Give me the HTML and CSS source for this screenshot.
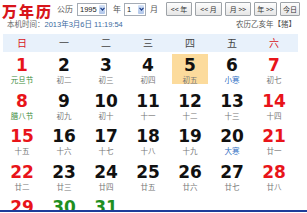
FILE: index.html
```html
<!DOCTYPE html>
<html lang="zh-CN">
<head>
<meta charset="utf-8">
<title>万年历</title>
<link rel="stylesheet" href="styles.css">
</head>
<body>
<div class="page">
  <div class="top">
    <div class="title">万年历</div>
    <span class="lbl l-gl">公历</span>
    <span class="sel sel-y"><span class="val">1995</span><span class="arr"><svg width="5" height="4" viewBox="0 0 5 4"><path d="M0.5 0.8 L2.5 3 L4.5 0.8" fill="none" stroke="#1d3f8a" stroke-width="1.2"/></svg></span></span>
    <span class="lbl l-y">年</span>
    <span class="sel sel-m"><span class="val">1</span><span class="arr"><svg width="5" height="4" viewBox="0 0 5 4"><path d="M0.5 0.8 L2.5 3 L4.5 0.8" fill="none" stroke="#1d3f8a" stroke-width="1.2"/></svg></span></span>
    <span class="lbl l-m">月</span>
    <div class="btns">
      <span class="btn">&lt;&lt; 年</span>
      <span class="btn b-w">&lt;&lt; 月</span>
      <span class="btn">月 &gt;&gt;</span>
      <span class="btn b-n">年 &gt;&gt;</span>
      <span class="btn btn-today">今日</span>
    </div>
  </div>
  <div class="info">
    <span class="now">本机时间：<span class="time">2013年3月6日 11:19:54</span></span>
    <span class="lyear">农历乙亥年【猪】</span>
  </div>
  <div class="weekbar">
    <div class="weeks">
      <span class="wk red">日</span><span class="wk">一</span><span class="wk">二</span><span class="wk">三</span><span class="wk">四</span><span class="wk">五</span><span class="wk red">六</span>
    </div>
  </div>
  <div class="days">
    <div class="day"><div class="num red">1</div><div class="lunar fest">元旦节</div></div>
    <div class="day"><div class="num">2</div><div class="lunar">初二</div></div>
    <div class="day"><div class="num">3</div><div class="lunar">初三</div></div>
    <div class="day"><div class="num">4</div><div class="lunar">初四</div></div>
    <div class="day today"><div class="num">5</div><div class="lunar">初五</div></div>
    <div class="day"><div class="num">6</div><div class="lunar term">小寒</div></div>
    <div class="day"><div class="num red">7</div><div class="lunar">初七</div></div>

    <div class="day"><div class="num red">8</div><div class="lunar fest">腊八节</div></div>
    <div class="day"><div class="num">9</div><div class="lunar">初九</div></div>
    <div class="day"><div class="num">10</div><div class="lunar">初十</div></div>
    <div class="day"><div class="num">11</div><div class="lunar">十一</div></div>
    <div class="day"><div class="num">12</div><div class="lunar">十二</div></div>
    <div class="day"><div class="num">13</div><div class="lunar">十三</div></div>
    <div class="day"><div class="num red">14</div><div class="lunar">十四</div></div>

    <div class="day"><div class="num red">15</div><div class="lunar">十五</div></div>
    <div class="day"><div class="num">16</div><div class="lunar">十六</div></div>
    <div class="day"><div class="num">17</div><div class="lunar">十七</div></div>
    <div class="day"><div class="num">18</div><div class="lunar">十八</div></div>
    <div class="day"><div class="num">19</div><div class="lunar">十九</div></div>
    <div class="day"><div class="num">20</div><div class="lunar term">大寒</div></div>
    <div class="day"><div class="num red">21</div><div class="lunar">廿一</div></div>

    <div class="day"><div class="num red">22</div><div class="lunar">廿二</div></div>
    <div class="day"><div class="num">23</div><div class="lunar">廿三</div></div>
    <div class="day"><div class="num">24</div><div class="lunar">廿四</div></div>
    <div class="day"><div class="num">25</div><div class="lunar">廿五</div></div>
    <div class="day"><div class="num">26</div><div class="lunar">廿六</div></div>
    <div class="day"><div class="num">27</div><div class="lunar">廿七</div></div>
    <div class="day"><div class="num red">28</div><div class="lunar">廿八</div></div>

    <div class="day"><div class="num red">29</div></div>
    <div class="day"><div class="num green">30</div></div>
    <div class="day"><div class="num green">31</div></div>
  </div>
</div>
</body>
</html>
```
FILE: styles.css
```css
html, body {
  margin: 0;
  padding: 0;
  background: #fff;
}
body {
  width: 307px;
  font-family: "Noto Sans CJK SC", "Noto Sans", sans-serif;
  color: #333;
}
.page {
  height: 210px;
  overflow: hidden;
  border-bottom: 2px solid #1e3d9a;
}
.top {
  display: flex;
  align-items: center;
  height: 18px;
}
.top > * {
  flex-shrink: 0;
  white-space: nowrap;
}
.title {
  width: 50px;
  margin-left: 2px;
  margin-top: 3px;
  font-size: 15px;
  line-height: 15px;
  font-weight: 900;
  color: #d8151b;
  letter-spacing: 2px;
}
.lbl {
  font-size: 8px;
  line-height: 10px;
  color: #555;
}
.l-gl { margin-left: 5px; }
.l-y { margin-left: 6px; }
.l-m { margin-left: 4px; }
.sel {
  display: flex;
  align-items: stretch;
  height: 11px;
  border: 1px solid #a5acb5;
  background: #fff;
  margin-left: 4px;
}
.sel-y { width: 28px; }
.sel-m { width: 20px; margin-left: 3px; }
.val {
  flex: 1;
  font-family: "Liberation Sans", sans-serif;
  font-size: 7.5px;
  line-height: 11px;
  color: #222;
  padding-left: 2px;
}
.arr {
  width: 6px;
  margin: 1px;
  background: linear-gradient(#d6e3f7, #b0c6ea);
  border-radius: 1px;
  display: flex;
  align-items: center;
  justify-content: center;
}
.btns {
  display: flex;
  gap: 3px;
  margin-left: 8px;
}
.btn {
  display: flex;
  align-items: center;
  justify-content: center;
  width: 24px;
  height: 12px;
  border: 1px solid #9ea3a8;
  border-radius: 1px;
  background: linear-gradient(#fdfdfd, #e6e6e6);
  font-size: 7px;
  color: #333;
  white-space: nowrap;
}
.btn.b-w { width: 25px; }
.btn.b-n { width: 21px; }
.btn-today { width: 18px; }
.info {
  display: flex;
  justify-content: space-between;
  margin-top: 1px;
  padding: 0 11px 0 7px;
  font-size: 7.5px;
  line-height: 10px;
  color: #666;
}
.time {
  color: #3a6a9e;
  font-family: "Liberation Sans", "Noto Sans CJK SC", sans-serif;
}
.lyear { color: #555; }
.weekbar {
  margin: 4px 9px 0 3px;
  height: 18px;
  background: #e8f1fb;
}
.weeks {
  display: grid;
  grid-template-columns: repeat(7, 42px);
  margin-left: -2px;
}
.wk {
  text-align: center;
  font-size: 10px;
  line-height: 18px;
  color: #444;
}
.wk.red { color: #d8151b; }
.days {
  display: grid;
  grid-template-columns: repeat(7, 42px);
  grid-auto-rows: 35.5px;
  margin-left: 1px;
}
.day {
  width: 36px;
  height: 30px;
  margin: 2px auto 0;
  text-align: center;
  box-sizing: border-box;
  padding-top: 2px;
}
.day.today { background: #fcdb9c; }
.num {
  font-family: "DejaVu Sans", sans-serif;
  font-weight: bold;
  font-size: 17px;
  line-height: 19px;
  color: #111;
}
.num.red { color: #e8141a; }
.num.green { color: #1f8f1f; }
.lunar {
  font-size: 7.5px;
  line-height: 10px;
  color: #777;
  white-space: nowrap;
}
.lunar.fest { color: #3a8a3a; }
.lunar.term { color: #2f6fc4; }
```
